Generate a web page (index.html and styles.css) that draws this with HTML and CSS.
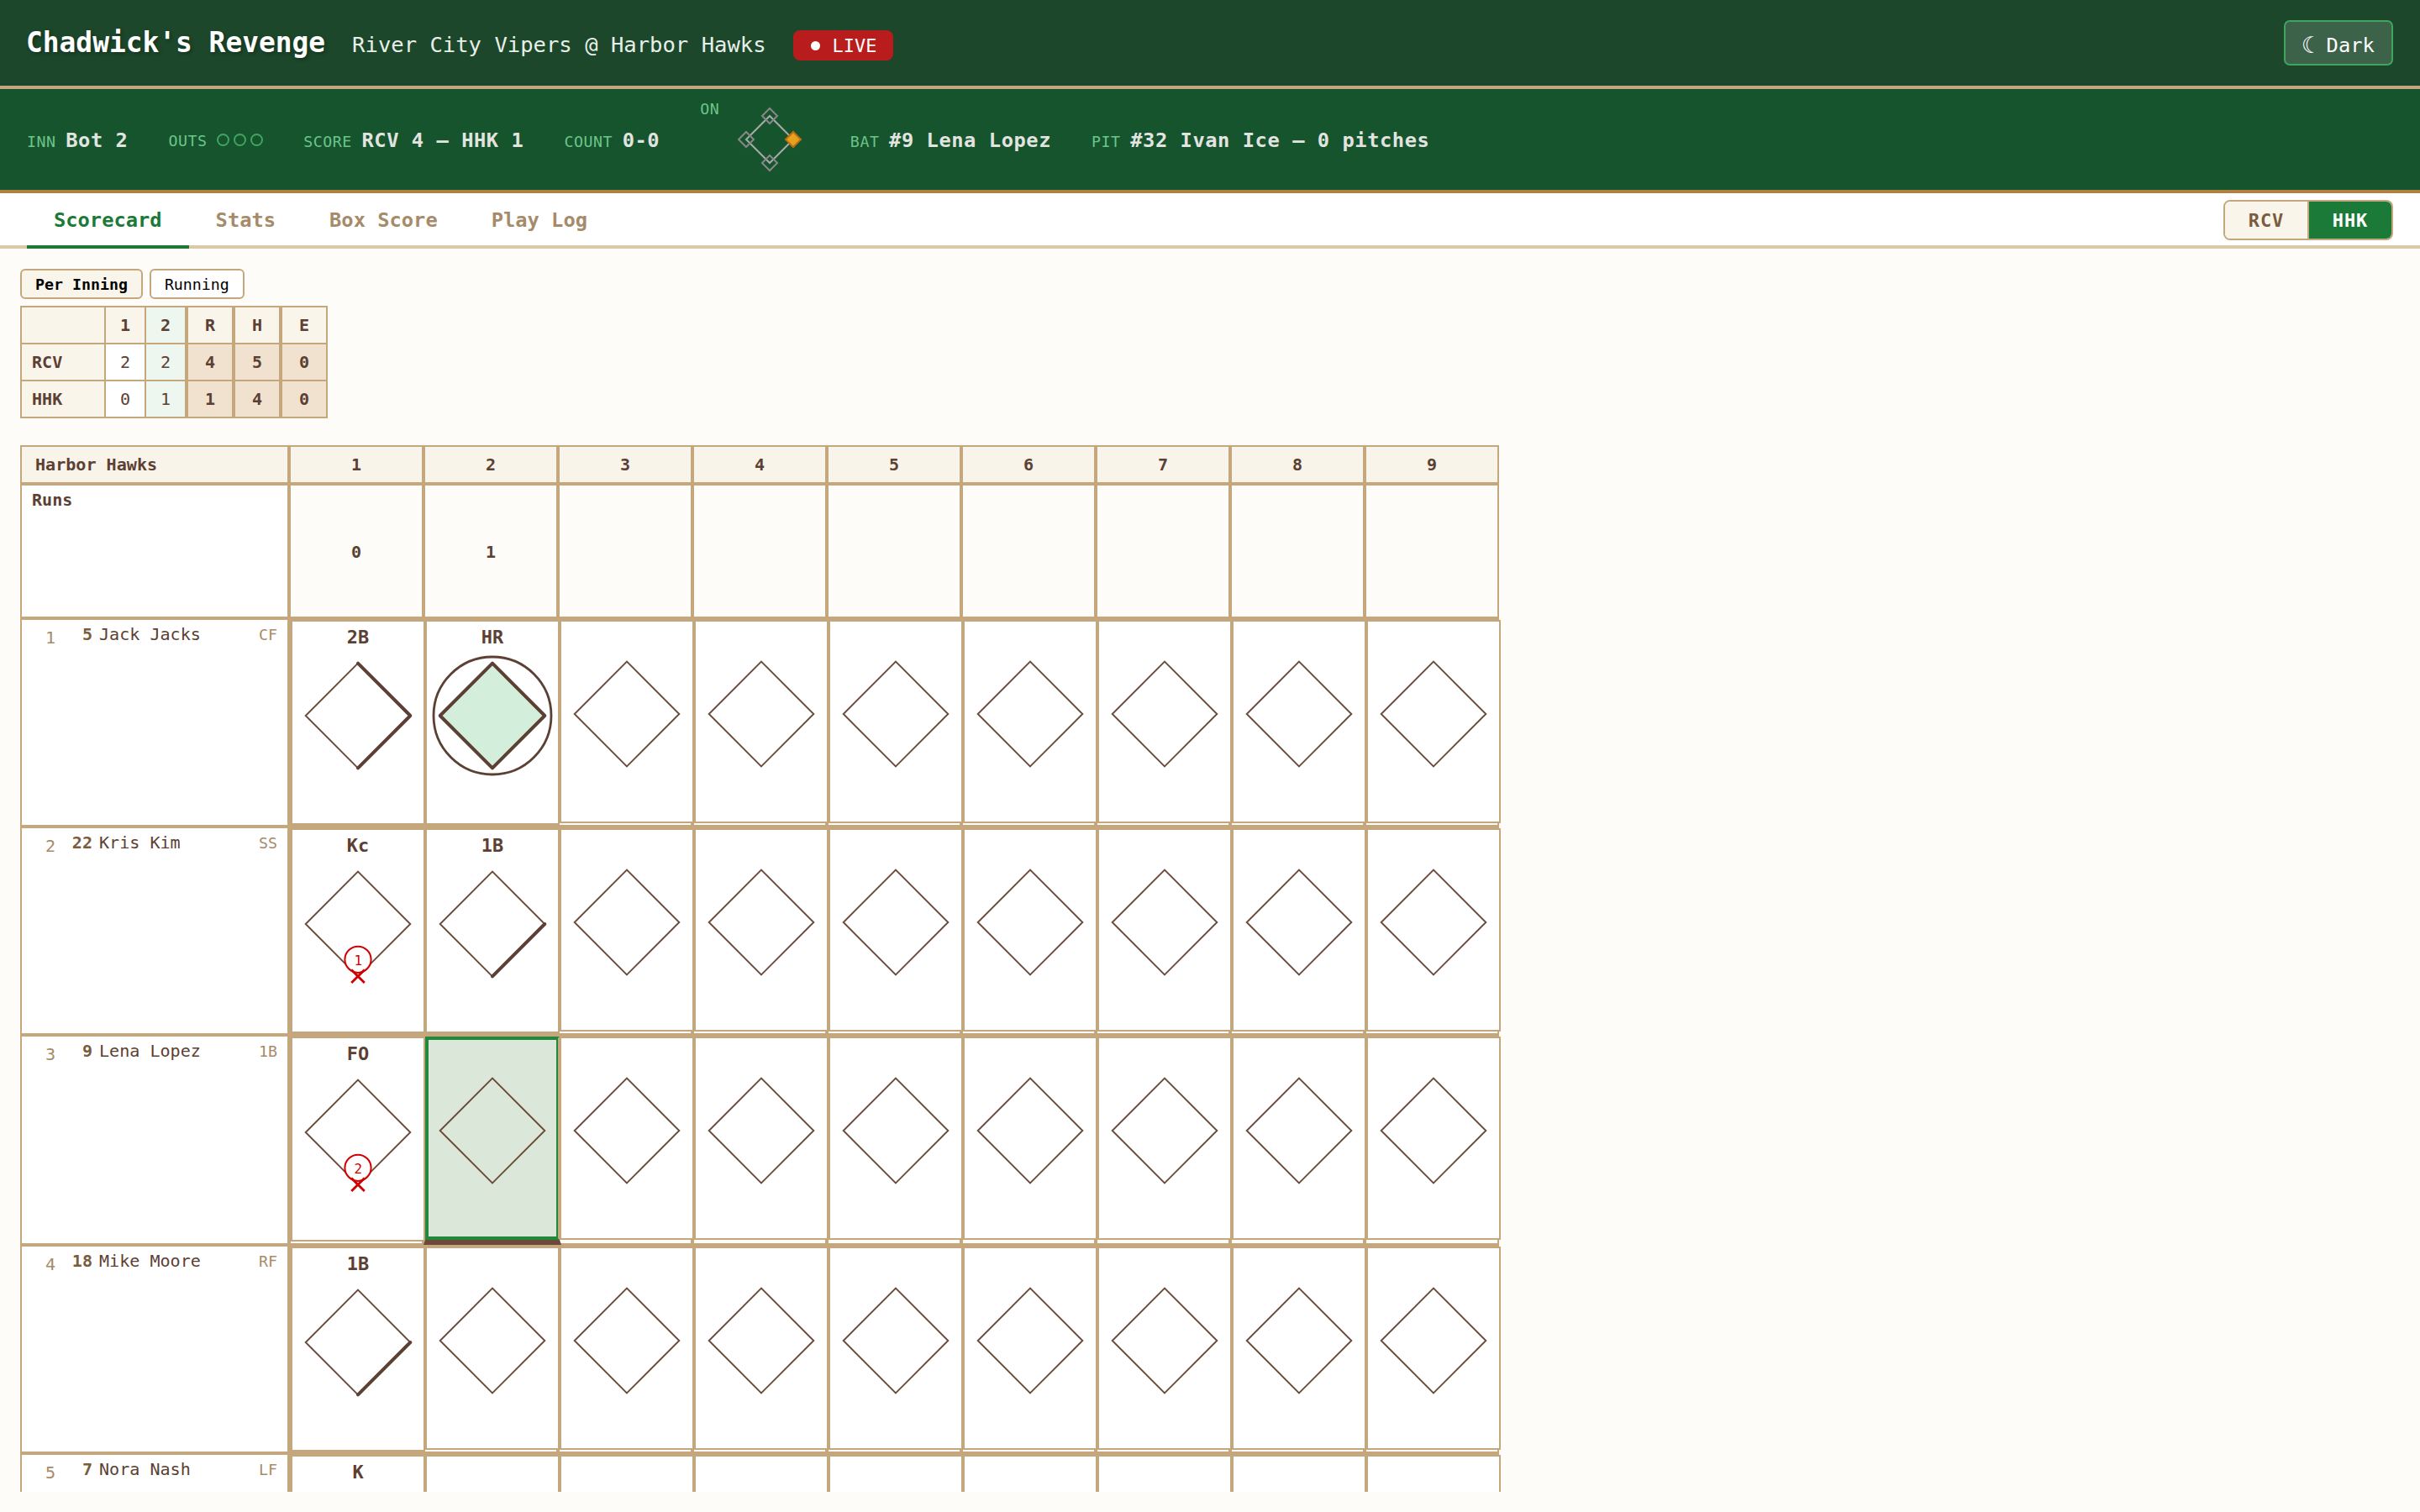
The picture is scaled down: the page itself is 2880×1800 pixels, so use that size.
FILE: index.html
```html
<!DOCTYPE html>
<html lang="en">
<head>
<meta charset="utf-8">
<title>Chadwick's Revenge</title>
<link rel="stylesheet" href="styles.css">
</head>
<body>
<header class="masthead">
  <h1 class="brand">Chadwick's Revenge</h1>
  <span class="matchup">River City Vipers @ Harbor Hawks</span>
  <span class="live"><i class="live-dot"></i>LIVE</span>
  <button class="theme"><span class="moon">☾</span>Dark</button>
</header>

<section class="situation">
  <div class="fact"><span class="key">INN</span><b class="val">Bot 2</b></div>
  <div class="fact fact-mid"><span class="key">OUTS</span><span class="outs"><i></i><i></i><i></i></span></div>
  <div class="fact"><span class="key">SCORE</span><b class="val">RCV 4 — HHK 1</b></div>
  <div class="fact"><span class="key">COUNT</span><b class="val">0-0</b></div>
  <div class="fact fact-top"><span class="key">ON</span>
    <svg class="bases" viewBox="0 0 96 96">
      <path class="paths" d="M48 20 76 48 48 76 20 48Z"/>
      <path class="base" d="M48 11 57 20 48 29 39 20Z"/>
      <path class="base" d="M20 39 29 48 20 57 11 48Z"/>
      <path class="base" d="M48 67 57 76 48 85 39 76Z"/>
      <path class="base base-on" d="M76 39 85 48 76 57 67 48Z"/>
    </svg>
  </div>
  <div class="fact"><span class="key">BAT</span><b class="val">#9 Lena Lopez</b></div>
  <div class="fact"><span class="key">PIT</span><b class="val">#32 Ivan Ice — 0 pitches</b></div>
</section>

<nav class="tabs">
  <a class="tab tab-on">Scorecard</a>
  <a class="tab">Stats</a>
  <a class="tab">Box Score</a>
  <a class="tab">Play Log</a>
  <div class="teams"><button class="team">RCV</button><button class="team team-on">HHK</button></div>
</nav>

<main class="page">
  <div class="scroller">
  <div class="modes"><button class="mode mode-on">Per Inning</button><button class="mode">Running</button></div>

  <table class="line">
    <tr><th class="club"></th><th>1</th><th class="now">2</th><th class="tot">R</th><th class="tot">H</th><th class="tot">E</th></tr>
    <tr><th class="club">RCV</th><td>2</td><td class="now">2</td><td class="tot">4</td><td class="tot">5</td><td class="tot">0</td></tr>
    <tr><th class="club">HHK</th><td>0</td><td class="now">1</td><td class="tot">1</td><td class="tot">4</td><td class="tot">0</td></tr>
  </table>

  <table class="card">
    <colgroup><col class="col-name"><col span="8" class="col-inn"><col class="col-last"></colgroup>
    <thead id="head"></thead>
    <tbody id="body"></tbody>
  </table>
  </div>
</main>
<script src="card.js"></script>
</body>
</html>
```
FILE: card.js
```js
const INNINGS = 9;
const lineup = [
  { no: 5, name: "Jack Jacks", pos: "CF", abs: [{ r: "2B", bases: 2 }, { r: "HR", bases: 4 }] },
  { no: 22, name: "Kris Kim", pos: "SS", abs: [{ r: "Kc", out: 1 }, { r: "1B", bases: 1 }] },
  { no: 9, name: "Lena Lopez", pos: "1B", abs: [{ r: "FO", out: 2 }, { active: true }] },
  { no: 18, name: "Mike Moore", pos: "RF", abs: [{ r: "1B", bases: 1 }] },
  { no: 7, name: "Nora Nash", pos: "LF", abs: [{ r: "K" }] }
];
const runs = [0, 1];

// Corners run home, first, second, third.
const corners = ["78 140.3", "140.3 78", "78 15.7", "15.7 78"];

function diamond(ab) {
  const n = ab.bases || 0;
  const scored = n === 4;
  let s = `<path class="field${scored ? " scored" : ""}" d="M${corners.join("L")}Z"/>`;
  if (scored) s += `<path class="ran" d="M${corners.join("L")}Z"/><circle class="homer" cx="78" cy="78" r="70"/>`;
  else if (n) s += `<path class="ran" d="M${corners.slice(0, n + 1).join("L")}"/>`;
  if (ab.out) {
    s += `<circle class="out" cx="78" cy="120.3" r="15.6"/><text class="out-no" x="78.3" y="126.5">${ab.out}</text>`;
    s += `<path class="out-x" d="M70.2 132.5l15.6 15.6m0-15.6l-15.6 15.6"/>`;
  }
  return `<svg class="dia" viewBox="0 0 156 156">${s}</svg>`;
}

function cell(ab) {
  if (!ab) return `<td><div class="ab"><div class="res"></div>${diamond({})}</div></td>`;
  const kind = ab.active ? " ab-active" : " ab-done";
  return `<td${ab.active ? ' class="side-end"' : ""}><div class="ab${kind}"><div class="res">${ab.r || ""}</div>${diamond(ab)}</div></td>`;
}

const cols = [...Array(INNINGS).keys()];
document.getElementById("head").innerHTML =
  `<tr><th class="team-name">Harbor Hawks</th>${cols.map(i => `<th>${i + 1}</th>`).join("")}</tr>`;
document.getElementById("body").innerHTML =
  `<tr class="runs"><th>Runs</th>${cols.map(i => `<td>${runs[i] ?? ""}</td>`).join("")}</tr>` +
  lineup.map((p, i) =>
    `<tr class="bat${p.abs.some(a => a.active) ? " bat-active" : ""}"><th><div class="who"><span class="slot">${i + 1}</span><span class="no">${p.no}</span><span class="name">${p.name}</span><span class="pos">${p.pos}</span></div></th>${cols.map(k => cell(p.abs[k])).join("")}</tr>`
  ).join("");
```
FILE: styles.css
```css
:root {
  --tan: #c4a77d;
  --ink: #5c4033;
  --cream: #faf5eb;
  /* Sizes below are nominal; the mono face is scaled to a 0.55em advance. */
  --k: 0.9133;
}
* { box-sizing: border-box; }
html, body { height: 1800px; overflow: hidden; }
body {
  margin: 0;
  background: #fdfcf8;
  color: var(--ink);
  font-family: "DejaVu Sans Mono", monospace;
}
button { font-family: inherit; margin: 0; }

.masthead {
  height: 106px;
  padding: 0 32px;
  display: flex;
  align-items: center;
  gap: 32px;
  background: #1c472b;
  border-bottom: 4px solid var(--tan);
  color: #fff;
}
.brand {
  margin: 0 0 0 -1px;
  font-size: calc(36px * var(--k));
  line-height: 44px;
  text-shadow: 2px 2px 4px rgba(0, 0, 0, .3);
}
.matchup { font-size: calc(28px * var(--k)); line-height: 34px; padding-top: 4px; color: #e8efe9; }
.live {
  display: flex;
  align-items: center;
  height: 36px;
  margin-top: 6px;
  padding: 1px 20px 0;
  border-radius: 8px;
  background: #b91c1c;
  font-size: calc(24px * var(--k));
}
.live-dot { width: 11px; height: 11px; margin: 0 15px 0 1px; border-radius: 50%; background: #fff; }
.theme {
  display: flex;
  align-items: center;
  width: 130px;
  height: 54px;
  margin-left: auto;
  padding: 6px 20px 0;
  border: 2px solid #3fa55f;
  border-radius: 7px;
  background: rgba(255, 255, 255, .15);
  color: #fff;
  font-size: calc(26px * var(--k));
  line-height: 28px;
}
.moon { width: 28.6px; margin: -1px 0 0; text-align: left; font-size: 27px; text-indent: -1px; }

.situation {
  height: 124px;
  padding: 0 32px;
  display: flex;
  align-items: center;
  gap: 48px;
  background: #16542e;
  border-bottom: 4px solid #b08040;
}
.fact { display: flex; align-items: baseline; gap: 11.6px; padding-top: 4px; line-height: 32px; }
.fact-mid { align-items: center; padding-top: 3px; }
.fact-top { align-items: flex-start; padding-top: 0; }
.fact-top .key { line-height: 24px; }
.key { font-size: calc(20px * var(--k)); letter-spacing: .55px; color: #6cc48a; }
.val { font-size: calc(26px * var(--k)); letter-spacing: .55px; color: #e2e4e0; }
.outs { display: flex; gap: 5px; margin-top: -3px; }
.outs i { width: 15px; height: 15px; border: 2px solid #3fa55f; border-radius: 50%; }
.bases { width: 96px; height: 96px; fill: none; stroke-width: 2; }
.paths { stroke: #aaa; }
.base { stroke: #888; }
.base-on { fill: #e8a020; stroke: #c07010; }

.tabs {
  height: 66px;
  padding: 0 32px;
  display: flex;
  background: #fff;
  border-bottom: 4px solid #dcc8a8;
}
.tab {
  height: 66px;
  padding: 0 32px;
  border-bottom: 4px solid transparent;
  line-height: 64px;
  font-size: calc(26px * var(--k));
  font-weight: bold;
  color: #a68b6a;
}
.tab-on { color: #1b7a38; border-bottom-color: #1b7a38; }
.teams {
  display: flex;
  width: 202px;
  height: 48px;
  margin: 8px 0 0 auto;
  border: 2px solid var(--tan);
  border-radius: 8px;
  overflow: hidden;
}
.team {
  flex: 1;
  padding: 0;
  border: 0;
  background: var(--cream);
  color: #7a5c3e;
  font-size: calc(24px * var(--k));
  font-weight: bold;
  letter-spacing: 1px;
}
.team-on { border-left: 2px solid var(--tan); background: #1b7a38; color: #fff; }

.page { height: 1504px; padding: 24px; }
.scroller { height: 1456px; overflow: hidden; }
.modes { display: flex; gap: 8px; }
.mode {
  height: 36px;
  padding: 0 16px;
  border: 2px solid var(--tan);
  border-radius: 6px;
  background: #fff;
  color: #000;
  font-size: calc(20px * var(--k));
}
.mode-on { background: var(--cream); font-weight: bold; }

.line {
  margin-top: 8px;
  border-spacing: 0;
  border: 2px solid var(--tan);
  border-width: 2px 0 0 2px;
  table-layout: fixed;
  width: 366px;
  font-size: calc(22px * var(--k));
}
.line th, .line td {
  width: 48px;
  height: 44px;
  padding: 0;
  border: 0 solid var(--tan);
  border-width: 0 2px 2px 0;
  background: #fff;
  text-align: center;
}
.line th { background: var(--cream); }
.line .club { width: 100px; padding-left: 12px; text-align: left; }
.line .now { background: #edf7ef; border-right-width: 4px; width: 50px; }
.line .tot { width: 56px; border-right-width: 4px; font-weight: bold; }
.line td.tot { background: #f0e2cf; }
.line .tot:last-child { width: 54px; border-right-width: 2px; }

.card {
  margin-top: 32px;
  width: 1760px;
  table-layout: fixed;
  border-spacing: 0;
  border: 0 solid var(--tan);
  border-width: 2px 0 0 2px;
  font-size: calc(22px * var(--k));
}
.col-name { width: 320px; }
.col-inn { width: 160px; }
.col-last { width: 158px; }
.card th, .card td {
  padding: 0;
  border: 0 solid var(--tan);
  border-width: 0 4px 4px 0;
  vertical-align: top;
}
.card th:last-child, .card td:last-child { border-right-width: 2px; }
.card thead th { height: 46px; background: #f9f4e9; vertical-align: middle; }
.card .team-name { padding-left: 16px; text-align: left; }
.card .runs th { height: 160px; padding: 5px 12px; background: #fff; text-align: left; }
.card .runs td { padding-top: 2px; vertical-align: middle; text-align: center; font-weight: bold; }
.bat { height: 248px; }
.bat-active { height: 250px; }
.bat th { background: #fff; font-weight: normal; text-align: left; }
.who { display: flex; align-items: baseline; padding: 3px 12px 0 12px; line-height: 28px; }
.slot { position: relative; top: 4px; width: 44px; text-align: center; color: #a68b6a; }
.no { width: 28px; text-align: right; font-weight: bold; color: #7a5c3e; }
.name { margin-left: 8px; }
.pos { margin-left: auto; font-size: calc(20px * var(--k)); color: #a68b6a; }

.ab { width: 160px; height: 242px; border: 2px solid var(--tan); background: #fff; }
.ab-done { height: 244px; }
.res { height: 32px; padding-top: 4px; line-height: 29px; text-align: center; font-size: calc(24px * var(--k)); font-weight: bold; }
.ab-done .res { height: 34px; }
.ab-active {
  position: relative;
  background: #dae7d9;
  box-shadow: inset 2px 2px #23883b, inset -2px -2px #23883b;
  border-color: #23883b var(--tan) #23883b #23883b;
}
.side-end .ab-active::after {
  content: "";
  position: absolute;
  left: -4px;
  top: 240px;
  width: 160px;
  border: 2px solid transparent;
  border-width: 6px 2px 0;
  border-top-color: #6b4a3a;
  transform: scaleY(-1);
}
.dia { display: block; width: 156px; height: 156px; fill: none; }
.field { stroke: #6b4a3a; stroke-width: 1.9; }
.scored { fill: #d4eedc; }
.ran { stroke: var(--ink); stroke-width: 4; stroke-linejoin: round; stroke-linecap: round; }
.homer { stroke: var(--ink); stroke-width: 2.8; }
.out { stroke: #d00000; stroke-width: 2; fill: rgba(255, 255, 255, .85); }
.out-no { fill: #d00000; font-size: calc(17.5px * var(--k)); text-anchor: middle; }
.out-x { stroke: #d00000; stroke-width: 2.8; }
```
